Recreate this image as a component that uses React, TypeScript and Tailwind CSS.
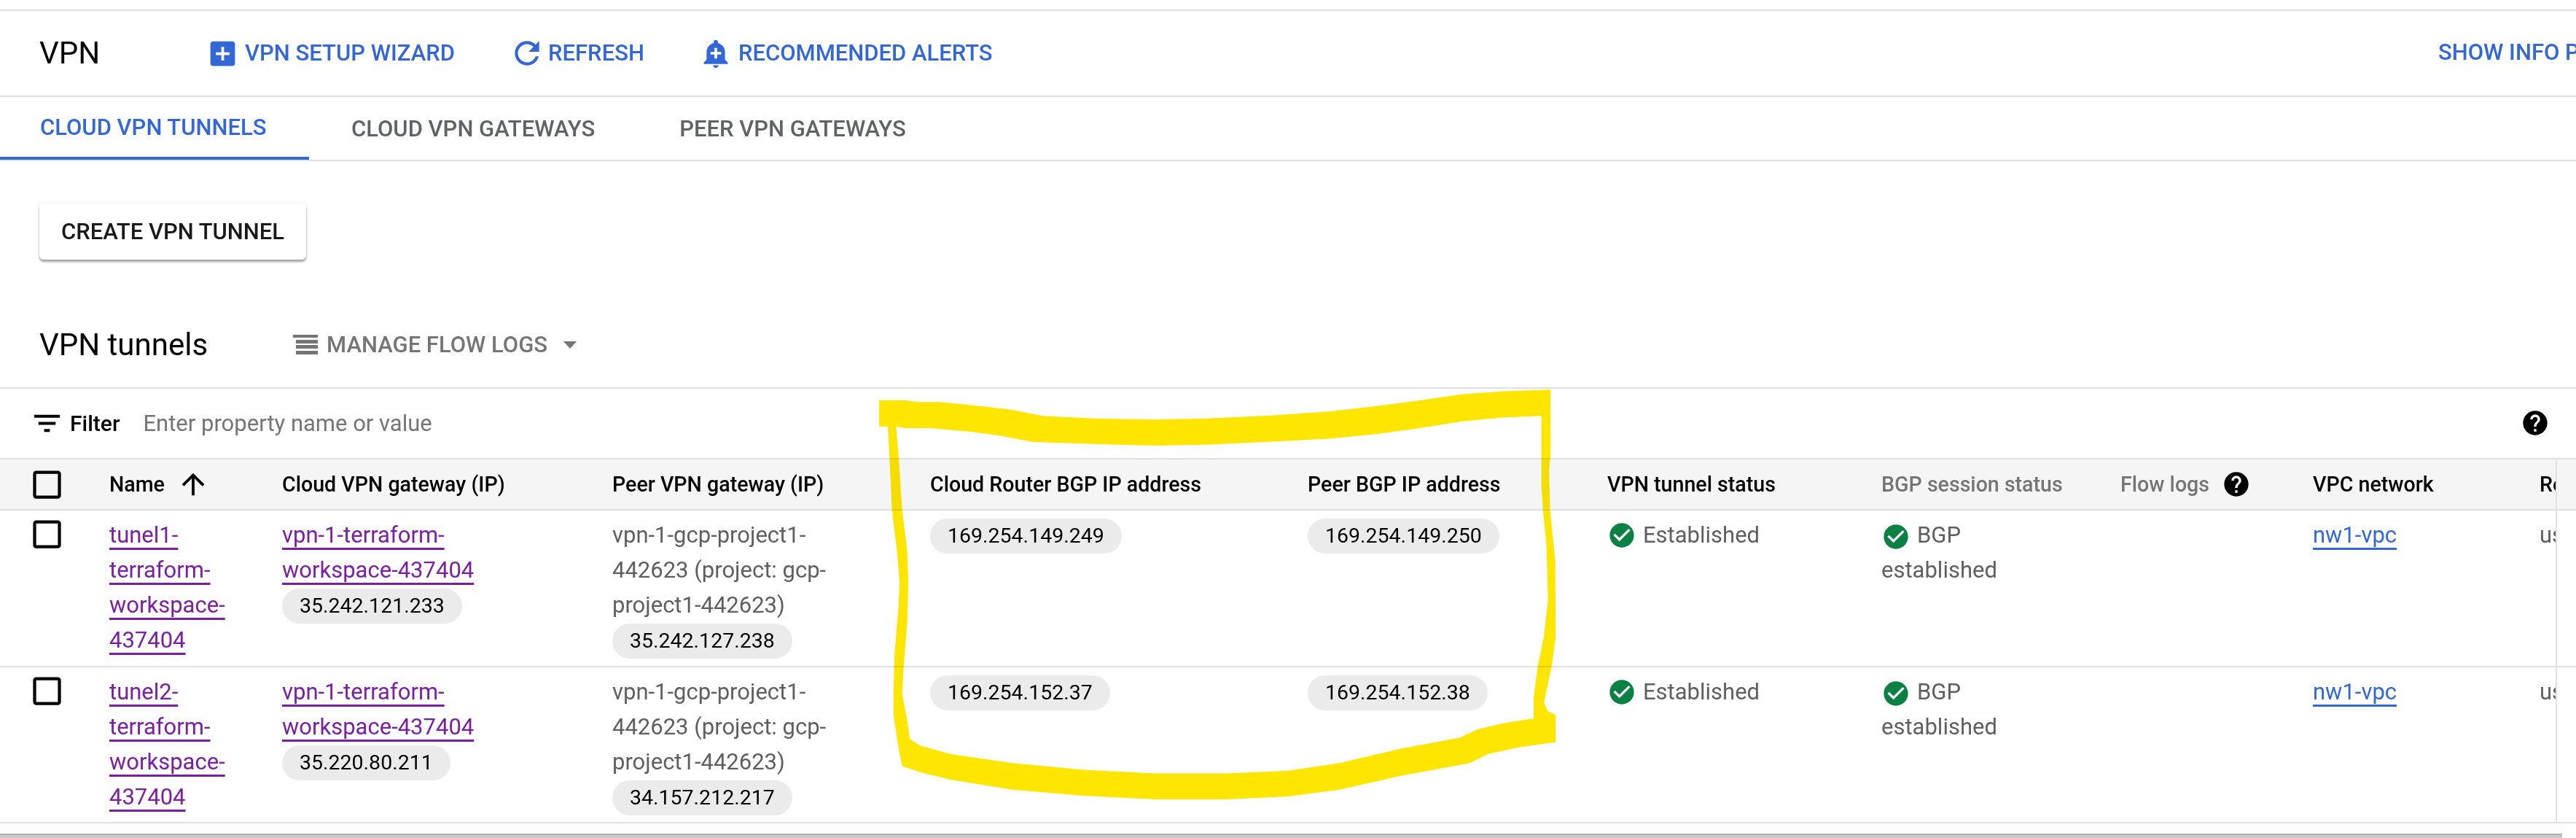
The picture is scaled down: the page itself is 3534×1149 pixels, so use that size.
import type { ReactNode } from 'react';

const PATHS = {
    addBox: 'M19 3H5c-1.11 0-2 .9-2 2v14c0 1.1.89 2 2 2h14c1.1 0 2-.9 2-2V5c0-1.1-.9-2-2-2zm-2 10h-4v4h-2v-4H7v-2h4V7h2v4h4v2z',
    refresh:
        'M17.65 6.35C16.2 4.9 14.21 4 12 4c-4.42 0-7.99 3.58-7.99 8s3.57 8 7.99 8c3.73 0 6.84-2.55 7.73-6h-2.08c-.82 2.33-3.04 4-5.65 4-3.31 0-6-2.69-6-6s2.69-6 6-6c1.66 0 3.14.69 4.22 1.78L13 11h7V4l-2.35 2.35z',
    addAlert:
        'M10.01 21.01c0 1.1.89 1.99 1.99 1.99s1.99-.89 1.99-1.99h-3.98zm8.87-4.19V11c0-3.25-2.25-5.97-5.29-6.69v-.72C13.59 2.71 12.88 2 12 2s-1.59.71-1.59 1.59v.72C7.37 5.03 5.12 7.75 5.12 11v5.82L3 18.94V20h18v-1.06l-2.12-2.12zM16 13.01h-3v3h-2v-3H8V11h3V8h2v3h3v2.01z',
    filter: 'M10 18h4v-2h-4v2zM3 6v2h18V6H3zm3 7h12v-2H6v2z',
    help: 'M12 2C6.48 2 2 6.48 2 12s4.48 10 10 10 10-4.48 10-10S17.52 2 12 2zm1 17h-2v-2h2v2zm2.07-7.75l-.9.92C13.45 12.9 13 13.5 13 15h-2v-.5c0-1.1.45-2.1 1.17-2.83l1.24-1.26c.37-.36.59-.86.59-1.41 0-1.1-.9-2-2-2s-2 .9-2 2H8c0-2.21 1.79-4 4-4s4 1.79 4 4c0 .88-.36 1.68-.93 2.25z',
    check: 'M12 2C6.48 2 2 6.48 2 12s4.48 10 10 10 10-4.48 10-10S17.52 2 12 2zm-2 15l-5-5 1.41-1.41L10 14.17l7.59-7.59L19 8l-9 9z',
    arrowUp: 'M4 12l1.41 1.41L11 7.83V20h2V7.83l5.58 5.59L20 12l-8-8-8 8z',
    checkbox: 'M19 5v14H5V5h14m0-2H5c-1.1 0-2 .9-2 2v14c0 1.1.9 2 2 2h14c1.1 0 2-.9 2-2V5c0-1.1-.9-2-2-2z',
};

function Icon({ d, className }: { d: string; className: string }) {
    return (
        <svg viewBox="0 0 24 24" fill="currentColor" className={className}>
            <path d={d} />
        </svg>
    );
}

function Pill({ children }: { children: ReactNode }) {
    return <span className="inline-block h-12 rounded-3xl bg-[#ebebeb] px-6 text-[28.5px] text-black">{children}</span>;
}

function PurpleLink({ children }: { children: ReactNode }) {
    return <a className="text-[#7b1fa2] underline decoration-[3px] underline-offset-[7px]">{children}</a>;
}

function Status({ label, iconClass }: { label: string; iconClass: string }) {
    return (
        <>
            <Icon d={PATHS.check} className={iconClass} />
            {label}
        </>
    );
}

const rows = [
    { name: 'tunel1-terraform-workspace-437404', gwIp: '35.242.121.233', peerIp: '35.242.127.238', routerIp: '169.254.149.249', peerBgp: '169.254.149.250', rowClass: 'h-[215px] border-b-2 border-[#e0e0e0] align-top' },
    { name: 'tunel2-terraform-workspace-437404', gwIp: '35.220.80.211', peerIp: '34.157.212.217', routerIp: '169.254.152.37', peerBgp: '169.254.152.38', rowClass: 'h-[214px] border-b-2 border-[#e0e0e0] align-top' },
];

function Checkbox() {
    return <Icon d={PATHS.checkbox} className="ml-[39px] size-[51px] text-black" />;
}

export default function App() {
    return (
        <div className="relative h-[1149px] w-[3534px] overflow-hidden bg-white font-['Roboto',sans-serif] text-[31px] leading-[48px] text-[#5f5f5f]">
            <div className="h-[15px] border-b-2 border-[#e0e0e0]"></div>

            <div className="flex h-[118px] items-center border-b-2 border-[#e0e0e0] pl-[54px] font-medium text-[#3367d6]">
                <h1 className="w-[229px] text-[42px] font-normal text-black">VPN</h1>
                <a className="flex items-center">
                    <Icon d={PATHS.addBox} className="mr-[8px] size-[45px]" />
                    VPN SETUP WIZARD
                </a>
                <a className="ml-[74px] flex items-center">
                    <Icon d={PATHS.refresh} className="mr-[4px] size-[50px]" />
                    REFRESH
                </a>
                <a className="ml-[76px] flex items-center">
                    <Icon d={PATHS.addAlert} className="mr-[9px] size-[44px]" />
                    RECOMMENDED ALERTS
                </a>
                <a className="absolute top-[48px] left-[3345px] whitespace-nowrap">SHOW INFO PANEL</a>
            </div>

            <div className="flex h-[88px] border-b-2 border-[#e0e0e0] font-medium text-[#5f6368]">
                <div className="flex h-[86px] w-[424px] items-center border-b-4 border-[#3367d6] pt-[2px] pl-[55px] text-[#3367d6]">CLOUD VPN TUNNELS</div>
                <div className="flex h-[86px] items-center pt-[2px] pl-[58px]">CLOUD VPN GATEWAYS</div>
                <div className="flex h-[86px] items-center pt-[2px] pl-[116px]">PEER VPN GATEWAYS</div>
            </div>

            <div className="pt-[58px] pl-[54px]">
                <button className="h-[77px] w-[366px] rounded-md bg-white font-medium text-[#1a1a1a] shadow-[0_3px_3px_rgba(0,0,0,0.35),0_0_6px_rgba(0,0,0,0.08)]">
                    CREATE VPN TUNNEL
                </button>
            </div>

            <div className="flex h-[177px] items-center border-b-2 border-[#e0e0e0] pt-[58px] pl-[54px]">
                <h2 className="w-[348px] text-[42px] font-normal text-black">VPN tunnels</h2>
                <a className="flex items-center font-medium text-[#757575]">
                    <svg viewBox="0 0 34 27" fill="currentColor" className="mr-[12px] h-[27px] w-[34px]">
                        <rect x="0" y="0" width="34" height="4" />
                        <rect x="4" y="7" width="30" height="5" />
                        <rect x="4" y="14" width="30" height="5" />
                        <rect x="4" y="22" width="30" height="5" />
                    </svg>
                    MANAGE FLOW LOGS
                    <svg viewBox="0 0 18 10" fill="currentColor" className="ml-[22px] h-[10px] w-[18px]">
                        <path d="M0 0h18L9 10z" />
                    </svg>
                </a>
            </div>

            <div className="flex h-[97px] items-center border-b-2 border-[#e0e0e0] pl-[41px]">
                <Icon d={PATHS.filter} className="mr-[8px] size-[47px] text-black" />
                <span className="text-[30px] font-medium text-black">Filter</span>
                <span className="ml-[32px] text-[#757575]">Enter property name or value</span>
                <Icon d={PATHS.help} className="absolute top-[560px] left-[3458px] size-[40px] text-black" />
            </div>

            <table className="w-[3534px] table-fixed border-collapse text-left">
                <colgroup>
                    <col className="w-[150px]" />
                    <col className="w-[237px]" />
                    <col className="w-[453px]" />
                    <col className="w-[436px]" />
                    <col className="w-[518px]" />
                    <col className="w-[411px]" />
                    <col className="w-[376px]" />
                    <col className="w-[328px]" />
                    <col className="w-[264px]" />
                    <col className="w-[311px]" />
                    <col className="w-[23px]" />
                    <col className="w-[27px]" />
                </colgroup>
                <thead>
                    <tr className="h-[69px] border-b-2 border-[#e0e0e0] bg-[#f5f5f5] text-[28.6px] text-black">
                        <th className="p-0 font-medium"><Checkbox /></th>
                        <th className="p-0 font-medium">
                            <span className="flex items-center">
                                Name
                                <Icon d={PATHS.arrowUp} className="ml-[16px] size-[46px] text-black" />
                            </span>
                        </th>
                        <th className="p-0 font-medium">Cloud VPN gateway (IP)</th>
                        <th className="p-0 font-medium">Peer VPN gateway (IP)</th>
                        <th className="p-0 font-medium">Cloud Router BGP IP address</th>
                        <th className="p-0 font-medium">Peer BGP IP address</th>
                        <th className="p-0 font-medium">VPN tunnel status</th>
                        <th className="p-0 font-medium text-[#757575]">BGP session status</th>
                        <th className="p-0 font-medium text-[#757575]">
                            <span className="flex items-center">
                                Flow logs
                                <Icon d={PATHS.help} className="ml-[17px] size-[40px] text-black" />
                            </span>
                        </th>
                        <th className="p-0 font-medium">VPC network</th>
                        <th className="overflow-hidden p-0 font-medium whitespace-nowrap">Region</th>
                        <th className="border-l-2 border-[#e0e0e0] p-0"></th>
                    </tr>
                </thead>
                <tbody>
                    {rows.map((row) => (
                        <tr key={row.name} className={row.rowClass}>
                            <td className="p-0 pt-[7px]"><Checkbox /></td>
                            <td className="p-0 pt-[10px] pr-[30px]"><PurpleLink>{row.name}</PurpleLink></td>
                            <td className="p-0 pt-[10px]">
                                <div className="w-[300px]"><PurpleLink>vpn-1-terraform-workspace-437404</PurpleLink></div>
                                <Pill>{row.gwIp}</Pill>
                            </td>
                            <td className="p-0 pt-[10px]">
                                <div className="w-[310px]">vpn-1-gcp-project1-442623 (project: gcp-project1-442623)</div>
                                <Pill>{row.peerIp}</Pill>
                            </td>
                            <td className="p-0 pt-[10px]"><Pill>{row.routerIp}</Pill></td>
                            <td className="p-0 pt-[10px]"><Pill>{row.peerBgp}</Pill></td>
                            <td className="p-0 pt-[10px]">
                                <Status label="Established" iconClass="mr-[9px] inline-block size-[40px] align-[-10px] text-[#0b8043]" />
                            </td>
                            <td className="p-0 pt-[10px]">
                                <div className="w-[260px]">
                                    <Status label="BGP established" iconClass="mr-[9px] inline-block size-[40px] align-[-12px] text-[#0b8043]" />
                                </div>
                            </td>
                            <td className="p-0"></td>
                            <td className="p-0 pt-[10px]"><a className="text-[#3367d6] underline decoration-[3px] underline-offset-[7px]">nw1-vpc</a></td>
                            <td className="overflow-hidden p-0 pt-[10px] whitespace-nowrap">us-central1</td>
                            <td className="border-l-2 border-[#e0e0e0] p-0"></td>
                        </tr>
                    ))}
                </tbody>
            </table>

            <div className="mt-[14px] h-[7px] w-[3515px] border-t-2 border-[#b0b0b0] bg-[#c8c8c8]"></div>

            <svg
                viewBox="0 0 1568 1568"
                preserveAspectRatio="none"
                className="absolute top-[500px] left-[1150px] h-[649px] w-[1100px] mix-blend-multiply"
            >
                <path
                    fill="#ffe600"
                    fillRule="evenodd"
                    d="M80 118L130 118L155 124L200 124L280 138L340 150L400 170L500 178L620 182L720 178L850 168L960 155L1050 138L1130 120L1220 98L1300 88L1393 83L1393 300L1390 350L1392 480L1402 650L1403 900L1395 1000L1380 1120L1388 1148L1403 1160L1403 1250L1330 1268L1270 1290L1235 1320L1100 1362L980 1408L880 1430L760 1440L620 1440L480 1428L340 1408L220 1375L160 1350L125 1330L118 1270L108 1160L108 1090L110 960L118 800L120 720L115 620L105 480L100 300L97 205L80 205Z M113 205L130 210L180 210L260 222L320 236L380 256L500 263L620 268L720 265L850 255L960 245L1050 230L1130 212L1220 188L1300 175L1375 170L1375 400L1378 480L1385 600L1388 780L1380 900L1368 1000L1360 1100L1360 1172L1300 1188L1250 1208L1215 1236L1100 1272L980 1320L880 1345L760 1354L620 1354L480 1342L340 1320L220 1290L160 1262L140 1240L135 1180L125 1090L128 1000L135 850L137 720L135 620L125 480L118 300Z"
                />
            </svg>
        </div>
    );
}
